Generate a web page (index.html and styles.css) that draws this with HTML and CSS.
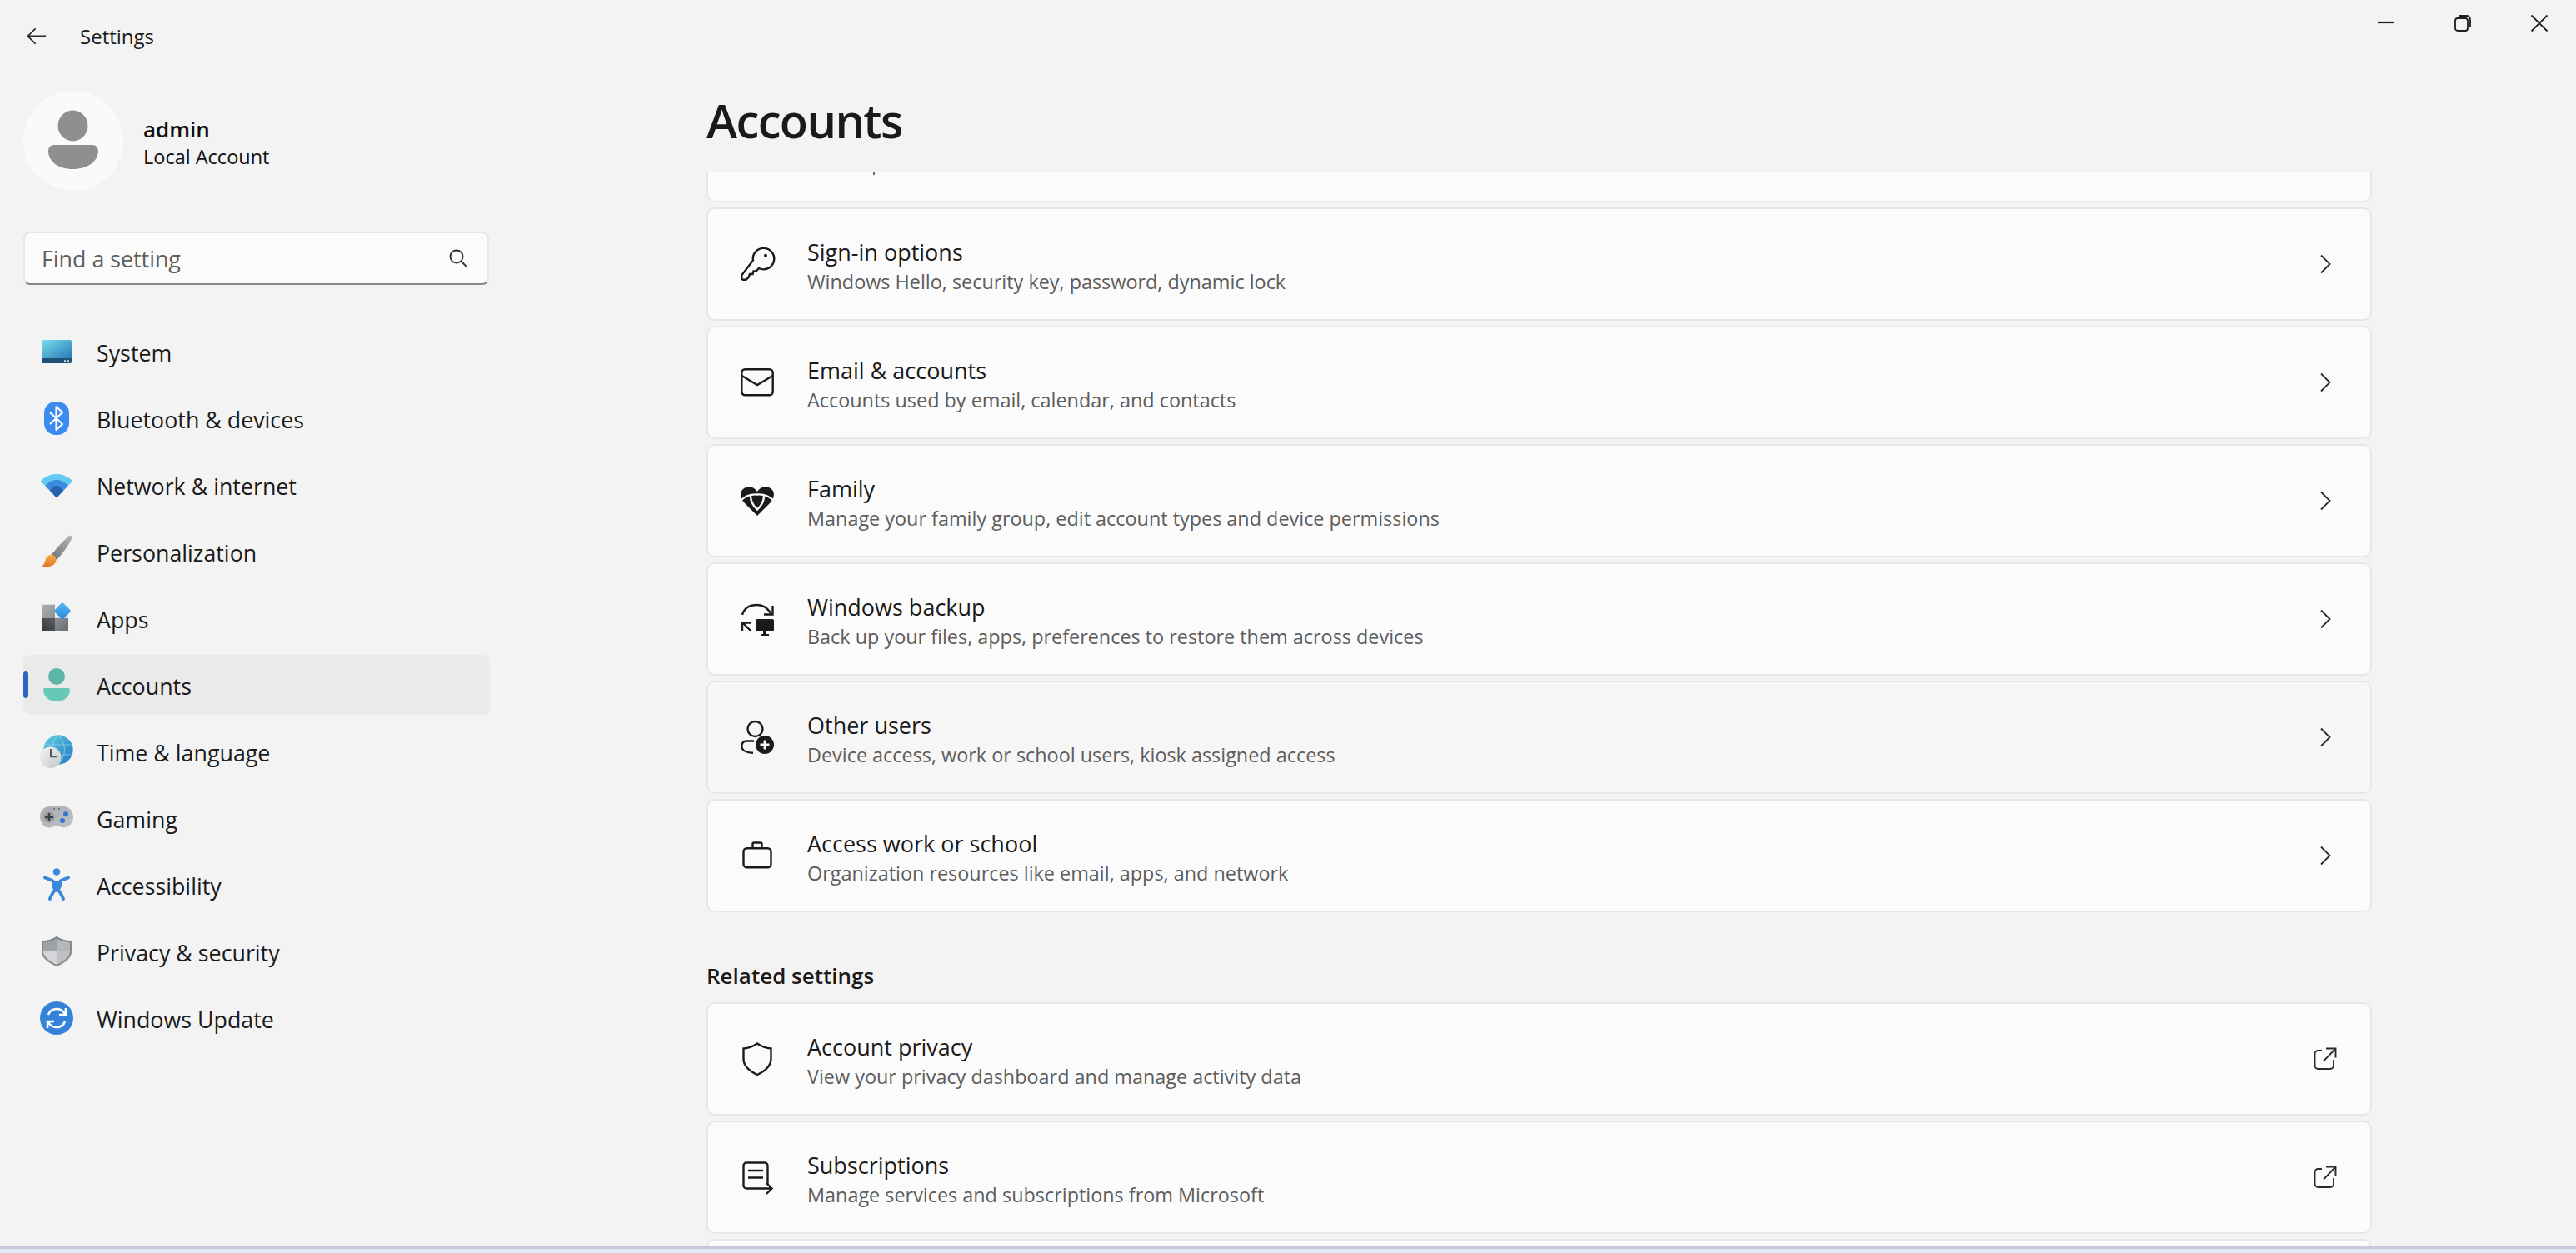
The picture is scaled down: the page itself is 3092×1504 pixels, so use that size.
FILE: index.html
```html
<!DOCTYPE html>
<html lang="en">
<head>
<meta charset="utf-8">
<title>Settings</title>
<link rel="stylesheet" href="styles.css">
</head>
<body>
<div class="window">
  <aside class="sidebar">
    <div class="titlebar">
      <svg class="back" viewBox="0 0 26 22"><path d="M11.5 1 1.5 11l10 10M1.5 11H25"/></svg>
      <span class="app-name">Settings</span>
    </div>
    <div class="profile">
      <div class="avatar">
        <svg viewBox="0 0 120 120"><ellipse cx="59.5" cy="42" rx="18" ry="18.5" class="grey"/><path class="grey" d="M36 65h47a7 7 0 0 1 7 7c0 13-13 22-30.500 22S30 85 30 72a7 7 0 0 1 6-7z"/></svg>
      </div>
      <div class="who">
        <div class="who-name">admin</div>
        <div class="who-type">Local Account</div>
      </div>
    </div>
    <div class="search">
      <span class="placeholder">Find a setting</span>
      <svg class="search-icon" viewBox="0 0 22 22"><circle cx="9" cy="9" r="7.500"/><path d="m14.500 14.500 6.500 6.700"/></svg>
    </div>
    <nav class="nav">
      <a class="nav-item">
        <svg class="nav-icon" viewBox="0 0 40 40"><defs><linearGradient id="sys" x1="0" y1="0" x2="1" y2="1"><stop offset="0" stop-color="#74e0e8"/><stop offset="1" stop-color="#2b78bb"/></linearGradient></defs><path fill="url(#sys)" d="M4 6h32a2 2 0 0 1 2 2v20H2V8a2 2 0 0 1 2-2z"/><path fill="#1f5176" d="M2 28h36v4a2 2 0 0 1-2 2H4a2 2 0 0 1-2-2z"/><path fill="#c9dce8" d="M29 30.200h2v2h-2zM33 30.200h2v2h-2z"/></svg>
        <span>System</span>
      </a>
      <a class="nav-item">
        <svg class="nav-icon" viewBox="0 0 40 40"><rect x="5" y="0" width="30" height="40" rx="14" fill="#3b8bf1"/><path d="m12 13 15 14-7.500 7V6l7.500 7-15 14" fill="none" stroke="#fff" stroke-width="2.200" stroke-linejoin="round"/></svg>
        <span>Bluetooth &amp; devices</span>
      </a>
      <a class="nav-item">
        <svg class="nav-icon" viewBox="0 0 40 40"><path fill="#62c9f3" d="M1.500 14.500C7 9.500 13 7 20 7s13 2.500 18.500 7.500a1.200 1.200 0 0 1 0 1.700L21 34.500a1.400 1.400 0 0 1-2 0L1.500 16.200a1.200 1.200 0 0 1 0-1.700z"/><path fill="#3a8ddc" d="M6.500 21C10 16.500 15 14 20 14s10 2.500 13.500 7L20 35z"/><path fill="#285fae" d="M12 27c2-3.500 5-6 8-6s6 2.500 8 6l-7 7.500a1.400 1.400 0 0 1-2 0z"/></svg>
        <span>Network &amp; internet</span>
      </a>
      <a class="nav-item">
        <svg class="nav-icon" viewBox="0 0 40 40"><defs><linearGradient id="hnd" x1="1" y1="0" x2="0" y2="1"><stop offset="0" stop-color="#b4b8bc"/><stop offset="1" stop-color="#6d7074"/></linearGradient><linearGradient id="brs" x1="0" y1="0" x2="0" y2="1"><stop offset="0" stop-color="#f6b445"/><stop offset="1" stop-color="#e56f27"/></linearGradient></defs><path fill="url(#hnd)" d="M34.500 1.500C36-.2 39.500 1.500 38.500 4 34 13 27 23 20 30l-6.500-6C20 16 28 7 34.500 1.500z"/><path fill="url(#brs)" d="M14 23.800c3 .2 5 2.700 5.500 6.200-.5 6-6.500 9.500-18.500 8.500 3.500-1.500 4.500-4.500 5.500-8.500 1-4 4-6.500 7.500-6.200z"/></svg>
        <span>Personalization</span>
      </a>
      <a class="nav-item">
        <svg class="nav-icon" viewBox="0 0 40 40"><defs><linearGradient id="ap1" x1="0" y1="0" x2="1" y2="1"><stop offset="0" stop-color="#adb1b5"/><stop offset="1" stop-color="#8c8f93"/></linearGradient><linearGradient id="ap2" x1="1" y1="0" x2="0" y2="1"><stop offset="0" stop-color="#5e6164"/><stop offset="1" stop-color="#35373a"/></linearGradient><linearGradient id="ap3" x1="0" y1="0" x2="1" y2="1"><stop offset="0" stop-color="#8d9094"/><stop offset="1" stop-color="#696c6f"/></linearGradient><linearGradient id="ap4" x1="0" y1="0" x2="1" y2="1"><stop offset="0" stop-color="#55bdf3"/><stop offset="1" stop-color="#2a84d8"/></linearGradient></defs><path fill="url(#ap1)" d="M4 3.700h14v16H2v-14a2 2 0 0 1 2-2z"/><path fill="url(#ap2)" d="M2 19.700h16v16H4a2 2 0 0 1-2-2z"/><path fill="url(#ap3)" d="M18 19.700h16v14a2 2 0 0 1-2 2H18z"/><rect x="19.500" y="3.800" width="15" height="15" rx="2" fill="url(#ap4)" transform="rotate(45 27 11.300)"/></svg>
        <span>Apps</span>
      </a>
      <a class="nav-item is-active">
        <svg class="nav-icon" viewBox="0 0 40 40"><ellipse cx="20" cy="10" rx="10" ry="10" fill="#5cb5a6"/><path fill="#68c8b6" d="M6 24h28a2 2 0 0 1 2 2c0 8-7 14-16 14S4 34 4 26a2 2 0 0 1 2-2z"/></svg>
        <span>Accounts</span>
      </a>
      <a class="nav-item">
        <svg class="nav-icon" viewBox="0 0 40 40"><defs><linearGradient id="glb" x1="0" y1="0" x2="1" y2="1"><stop offset="0" stop-color="#5fd3df"/><stop offset="1" stop-color="#2474c2"/></linearGradient><linearGradient id="clk" x1="0" y1="0" x2="1" y2="1"><stop offset="0" stop-color="#f4f4f4"/><stop offset="1" stop-color="#c4c6c8"/></linearGradient></defs><circle cx="22" cy="18" r="17.700" fill="url(#glb)"/><path d="M5 12h34M5 24h34M22 .5c-10 10-10 25 0 35M22 .5c10 10 10 25 0 35" fill="none" stroke="#8fd6ea" stroke-width="1.100" opacity=".7"/><circle cx="12.700" cy="27.200" r="12.800" fill="url(#clk)"/><path d="M13 17v9.300h7.300" fill="none" stroke="#55585b" stroke-width="2"/></svg>
        <span>Time &amp; language</span>
      </a>
      <a class="nav-item">
        <svg class="nav-icon" viewBox="0 0 40 40"><defs><linearGradient id="pad" x1="0" y1="0" x2="1" y2="1"><stop offset="0" stop-color="#a9acb0"/><stop offset="1" stop-color="#c0c3c6"/></linearGradient></defs><path fill="url(#pad)" d="M12 6h16c7 0 12 5.500 12 12.500S35 31.500 29 31.500c-3.500 0-4.500-2-9-2s-5.500 2-9 2C5 31.500 0 25.500 0 18.500S5 6 12 6z"/><circle cx="11" cy="19" r="6.700" fill="#9a9da1"/><path stroke="#3e4144" stroke-width="2.400" fill="none" d="M6 19h10M11 14v10"/><circle cx="31" cy="15.300" r="3" fill="#2f78d6"/><circle cx="27" cy="23" r="3" fill="#2f78d6"/><path fill="#4a4d50" d="M16.300 8.300h1.500v1.500h-1.500zM22 8.300h1.500v1.500H22z"/></svg>
        <span>Gaming</span>
      </a>
      <a class="nav-item">
        <svg class="nav-icon" viewBox="0 0 40 40"><circle cx="20" cy="4.500" r="4.300" fill="#3a88dc"/><path fill="none" stroke="#3a88dc" stroke-width="4" stroke-linecap="round" d="M6 11.500 15 15M34 11.500 25 15M12 37c1.500-5 4.500-9 8-13 3.500 4 6.500 8 8 13"/><path fill="#3a88dc" d="M14 14c4 1.500 8 1.500 12 0v8c-1 3-3 5-6 7-3-2-5-4-6-7z"/></svg>
        <span>Accessibility</span>
      </a>
      <a class="nav-item">
        <svg class="nav-icon" viewBox="0 0 40 40"><path fill="#b4b7ba" d="M20 2c5 3.500 10 5 18 5.500V20H20z"/><path fill="#9ea1a5" d="M20 2c-5 3.500-10 5-18 5.500V20h18z"/><path fill="#d3d5d7" d="M2 20h18v18C9 33 2 28 2 20z"/><path fill="#bfc1c4" d="M38 20H20v18c11-5 18-10 18-18z"/><path fill="none" stroke="#85888c" stroke-width="2" d="M20 3.200c5 3.300 9.800 4.800 17 5.200V20c0 7-6 12-17 16.900C9 32 3 27 3 20V8.400c7.200-.4 12-1.900 17-5.200z"/></svg>
        <span>Privacy &amp; security</span>
      </a>
      <a class="nav-item">
        <svg class="nav-icon" viewBox="0 0 40 40"><circle cx="20" cy="20" r="20" fill="#3583d8"/><path d="M10 16c1.500-4.500 5.500-7 10-7 3.500 0 6.500 1.500 8.500 4l2 2.500M31 8v8h-8M30 24c-1.500 4.500-5.500 7-10 7-3.500 0-6.500-1.500-8.500-4l-2-2.500M9 32v-8h8" fill="none" stroke="#fff" stroke-width="2.600"/></svg>
        <span>Windows Update</span>
      </a>
    </nav>
  </aside>

  <main class="main">
    <header class="main-head">
      <h1 class="page-title">Accounts</h1>
      <div class="controls">
        <svg class="ctl" viewBox="0 0 20 20"><path d="M0 9h20" stroke-width="2.200"/></svg>
        <svg class="ctl" viewBox="0 0 20 20"><rect x="1" y="4" width="15" height="15" rx="3"/><path d="M5 1h9c3 0 5 2 5 5v9"/></svg>
        <svg class="ctl" viewBox="0 0 20 20"><path d="m.500.500 19 19M19.500.500l-19 19"/></svg>
      </div>
    </header>
    <div class="scroller">
      <div class="scroll-content">
        <div class="card card-clipped"><i class="descender"></i></div>
        <div class="card">
          <svg class="card-icon" viewBox="0 0 40 40"><path d="M15 15.500A12.700 12.700 0 1 1 22 25l-3.500 3.500h-3l-1 3.500H11l-1.500 4-3 2.700H3a1.800 1.800 0 0 1-1.700-1.700v-3c0-.6.300-1.200.7-1.500z"/><circle cx="30" cy="9.700" r="2" class="solid"/></svg>
          <div class="card-text"><div class="card-title">Sign-in options</div><div class="card-sub">Windows Hello, security key, password, dynamic lock</div></div>
          <svg class="card-end" viewBox="0 0 40 40"><path d="m15 9.500 10.500 10.500L15 30.500"/></svg>
        </div>
        <div class="card">
          <svg class="card-icon" viewBox="0 0 40 40"><rect x="1.300" y="4.300" width="37.400" height="31" rx="4"/><path d="m1.500 12 18.500 11 18.500-11"/></svg>
          <div class="card-text"><div class="card-title">Email &amp; accounts</div><div class="card-sub">Accounts used by email, calendar, and contacts</div></div>
          <svg class="card-end" viewBox="0 0 40 40"><path d="m15 9.500 10.500 10.500L15 30.500"/></svg>
        </div>
        <div class="card">
          <svg class="card-icon" viewBox="0 0 40 40"><path class="solid" d="M20 38 4 22C-1 16-1 9 3 6c5-4.500 13-3.500 17 3 4-6.500 12-7.500 17-3 4 3 4 10-1 16z"/><path class="knock" d="M1 19c5-5 12-7 19-6.500C27 12 34 14 39.500 20"/><path class="knock" d="M12 14c0 7 3 12 8 16.500 5-4.500 8-9.500 8-16.500"/></svg>
          <div class="card-text"><div class="card-title">Family</div><div class="card-sub">Manage your family group, edit account types and device permissions</div></div>
          <svg class="card-end" viewBox="0 0 40 40"><path d="m15 9.500 10.500 10.500L15 30.500"/></svg>
        </div>
        <div class="card">
          <svg class="card-icon" viewBox="0 0 40 40"><path d="M2 15C4 8 10 3 20 3c6 0 12 3 17 11"/><path d="M38.500 4v10.500H28"/><path d="M2 24.500h10M2 23.500V34M2.500 24.500l10 10"/><path class="solid" d="M20 20h18a2 2 0 0 1 2 2v11a2 2 0 0 1-2 2H31v3h3v2H24v-2h3v-3h-7a2 2 0 0 1-2-2V22a2 2 0 0 1 2-2z"/></svg>
          <div class="card-text"><div class="card-title">Windows backup</div><div class="card-sub">Back up your files, apps, preferences to restore them across devices</div></div>
          <svg class="card-end" viewBox="0 0 40 40"><path d="m15 9.500 10.500 10.500L15 30.500"/></svg>
        </div>
        <div class="card is-hover">
          <svg class="card-icon" viewBox="0 0 40 40"><circle cx="17.500" cy="10" r="9"/><path d="M16 24.500H7a5.700 5.700 0 0 0-5.700 5.700c0 5.500 5.700 8.500 13.700 8.500"/><circle cx="29" cy="29" r="11" class="solid"/><path class="knock thin" d="M29 23.500v11M23.500 29h11"/></svg>
          <div class="card-text"><div class="card-title">Other users</div><div class="card-sub">Device access, work or school users, kiosk assigned access</div></div>
          <svg class="card-end" viewBox="0 0 40 40"><path d="m15 9.500 10.500 10.500L15 30.500"/></svg>
        </div>
        <div class="card">
          <svg class="card-icon" viewBox="0 0 40 40"><rect x="3.500" y="11.300" width="33" height="23" rx="4"/><path d="M14.500 11V6a1.500 1.500 0 0 1 1.500-1.500h8a1.500 1.500 0 0 1 1.500 1.500v5"/></svg>
          <div class="card-text"><div class="card-title">Access work or school</div><div class="card-sub">Organization resources like email, apps, and network</div></div>
          <svg class="card-end" viewBox="0 0 40 40"><path d="m15 9.500 10.500 10.500L15 30.500"/></svg>
        </div>
        <h2 class="section-title">Related settings</h2>
        <div class="card">
          <svg class="card-icon" viewBox="0 0 40 40"><path d="M20 1.500C25 5 30 7 36.500 7.500V20c0 8-6 14-16.500 19C9.500 34 3.500 28 3.500 20V7.500C10 7 15 5 20 1.500z"/></svg>
          <div class="card-text"><div class="card-title">Account privacy</div><div class="card-sub">View your privacy dashboard and manage activity data</div></div>
          <svg class="card-end" viewBox="0 0 40 40"><path d="M30 21v7a4 4 0 0 1-4 4H11.500a4 4 0 0 1-4-4V14a4 4 0 0 1 4-4H16M18 22.500 32.500 7.500M21 7.500h11.500V18.500"/></svg>
        </div>
        <div class="card">
          <svg class="card-icon" viewBox="0 0 40 40"><path d="M32.500 28V6a3.500 3.500 0 0 0-3.500-3.500H7A3.500 3.500 0 0 0 3.500 6v24A3.500 3.500 0 0 0 7 33.500h30M31 27l6.500 6.500L31 40"/><path d="M9 12h18M9 20.500h18"/></svg>
          <div class="card-text"><div class="card-title">Subscriptions</div><div class="card-sub">Manage services and subscriptions from Microsoft</div></div>
          <svg class="card-end" viewBox="0 0 40 40"><path d="M30 21v7a4 4 0 0 1-4 4H11.500a4 4 0 0 1-4-4V14a4 4 0 0 1 4-4H16M18 22.500 32.500 7.500M21 7.500h11.500V18.500"/></svg>
        </div>
        <div class="card"></div>
      </div>
    </div>
  </main>
</div>
<div class="desktop-strip"></div>
</body>
</html>
```
FILE: styles.css
```css
* { box-sizing: border-box; }
html, body { margin: 0; height: 100%; overflow: hidden; }
body {
  background: #f3f3f3;
  color: #1a1a1a;
  font-family: "Open Sans", "Noto Sans", sans-serif;
}
.window { display: flex; height: 1496px; }

/* sidebar */
.sidebar { width: 848px; flex: none; padding-left: 28px; }
.titlebar { display: flex; align-items: center; height: 87px; padding-left: 4px; }
.back { width: 24px; height: 21px; fill: none; stroke: #2b2b2b; stroke-width: 1.9; }
.app-name { margin-left: 40px; font-size: 24px; }
.profile { display: flex; align-items: center; margin-top: 22px; height: 120px; }
.avatar { width: 120px; height: 120px; border-radius: 50%; background: #fafafa; }
.avatar svg { display: block; width: 120px; height: 120px; }
.grey { fill: #8f8f8f; }
.who { margin-left: 24px; padding-top: 5px; }
.who-name { font-size: 26px; font-weight: 600; line-height: 34px; color: #111; }
.who-type { font-size: 23.5px; line-height: 33px; color: #111; }
.search {
  display: flex; align-items: center; justify-content: space-between;
  width: 559px; height: 64px; margin-top: 49px;
  padding: 0 24px 0 20px;
  background: #fbfbfb;
  border: 2px solid #e6e6e6; border-bottom-color: #868686;
  border-radius: 8px;
}
.placeholder { font-size: 26.8px; color: #5f5f5f; }
.search-icon { width: 22px; height: 22px; fill: none; stroke: #333; stroke-width: 1.9; }
.nav { display: flex; flex-direction: column; gap: 8px; width: 560px; margin-top: 44px; }
.nav-item {
  position: relative;
  display: flex; align-items: center; gap: 28px;
  height: 72px; padding-left: 20px;
  border-radius: 8px;
  font-size: 26.8px;
  color: #1a1a1a;
}
.nav-item span { padding-top: 3.500px; }
.nav-item.is-active { background: #eaeaea; }
.nav-item.is-active::before {
  content: ""; position: absolute; left: 0; top: 20px;
  width: 6px; height: 32px; border-radius: 3px; background: #2a66bf;
}
.nav-icon { width: 40px; height: 40px; flex: none; }

/* main */
.main { flex: 1; min-width: 0; display: flex; flex-direction: column; }
.main-head { display: flex; justify-content: space-between; height: 207px; flex: none; padding-right: 34px; }
.page-title { margin: 0; font-size: 56px; font-weight: 600; line-height: 76px; padding-top: 106px; letter-spacing: -1.6px; color: #1a1a1a; }
.controls { display: flex; gap: 72px; padding-top: 18px; }
.ctl { width: 20px; height: 20px; fill: none; stroke: #1c1c1c; stroke-width: 1.8; overflow: visible; }
.scroller { flex: 1; overflow: hidden; width: 1999px; }
.scroll-content { display: flex; flex-direction: column; gap: 6px; margin-top: -100px; }
.card {
  display: flex; align-items: center; flex: none;
  height: 136px;
  padding: 0 34px 0 39px;
  background: #fbfbfb;
  border: 2px solid #e7e7e7;
  border-radius: 10px;
}
.card.is-hover { background: #f6f6f6; }
.card-clipped { align-items: flex-start; padding-left: 198px; }
.descender { display: block; width: 2px; height: 3px; margin-top: 98px; background: #6a6a6a; }
.card-icon { width: 40px; height: 40px; flex: none; fill: none; stroke: #1a1a1a; stroke-width: 2.4; overflow: visible; }
.card-icon .solid { fill: #1a1a1a; stroke: none; }
.card-icon .knock { fill: none; stroke: #fbfbfb; stroke-width: 2.4; }
.card-icon .thin { stroke-width: 2.8; }
.card-text { flex: 1; margin-left: 40px; padding-top: 6px; }
.card-title { font-size: 27px; line-height: 35px; color: #1a1a1a; }
.card-sub { font-size: 23.4px; line-height: 36px; color: #5d5d5d; }
.card-end { width: 40px; height: 40px; flex: none; fill: none; stroke: #2a2a2a; stroke-width: 1.9; overflow: visible; }
.section-title { margin: 0; font-size: 26px; font-weight: 600; line-height: 36px; padding: 52px 0 8px; color: #1a1a1a; }

.desktop-strip {
  height: 8px;
  background: #e1eaf6;
  border-top: 3px solid #c4cad7;
}
```
